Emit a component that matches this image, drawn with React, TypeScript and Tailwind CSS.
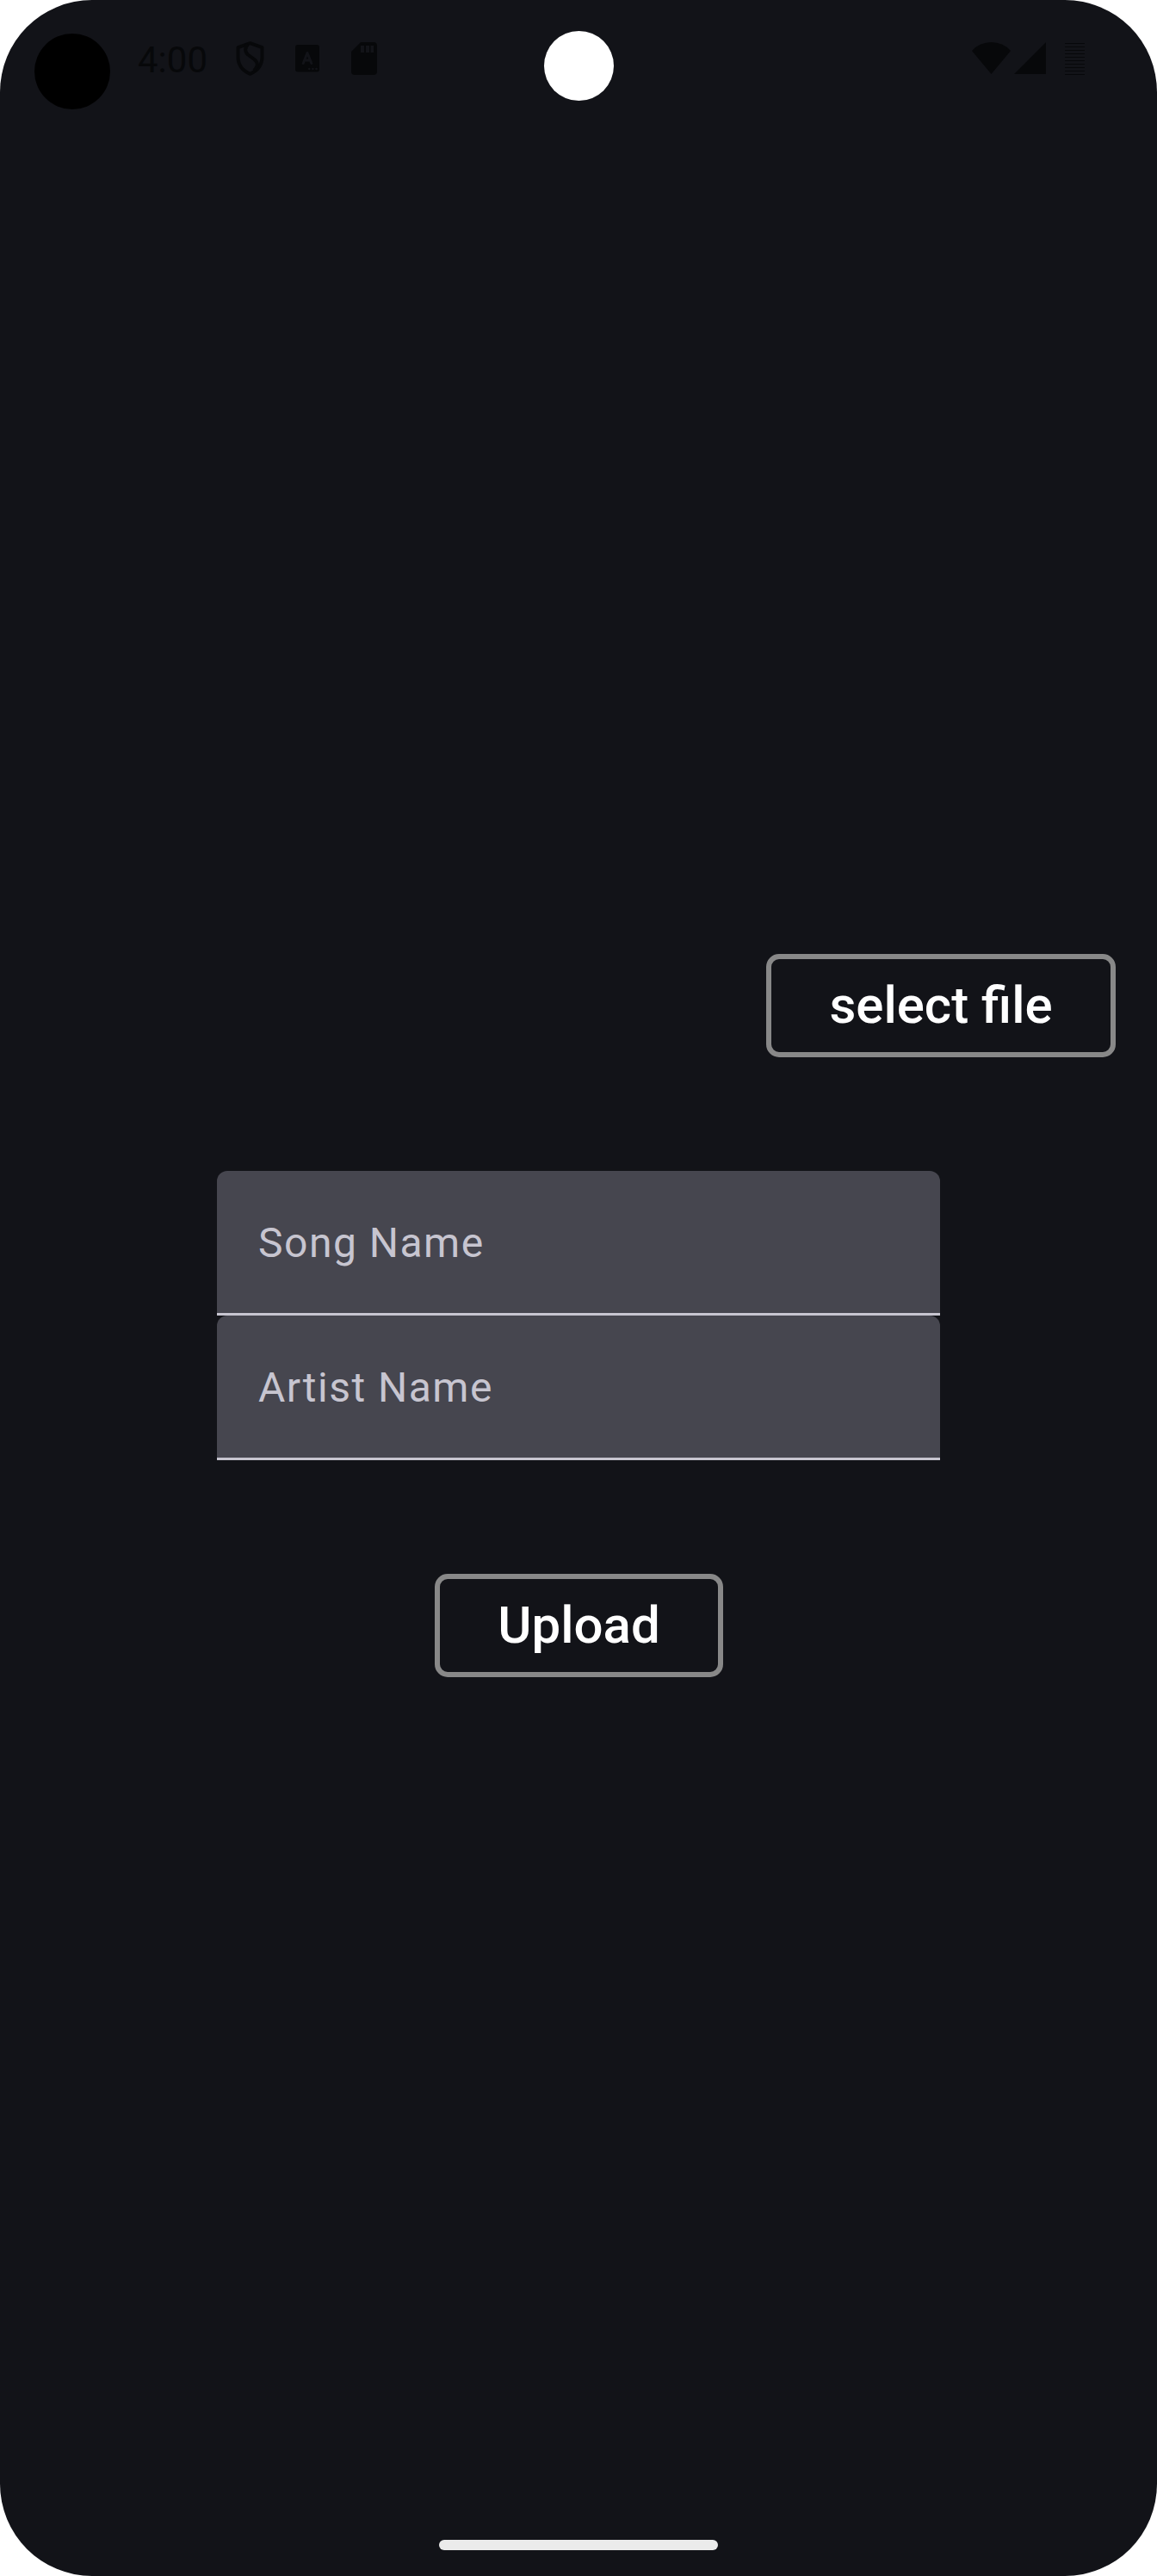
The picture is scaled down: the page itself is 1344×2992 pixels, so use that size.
import React from "react";

const BATTERY_LINES = [50, 54, 58, 62, 66, 70, 74, 78, 82, 86];

function ShieldIcon() {
  return (
    <svg className="ml-[33px] h-10 w-[34px]" viewBox="0 0 34 40" fill="none" stroke="#07080a" strokeWidth="4" strokeLinejoin="round">
      <path d="M16.500 2.200 L30.500 7.200 V18 C30.500 27 25.500 34 16.500 37.800 C7.500 34 2.500 27 2.500 18 V7.200 Z" />
      <path d="M14 3.500 C10 7.500 10.500 12.500 14 15.500 L21.500 21 C26 25 26 28.500 21 34" />
    </svg>
  );
}

function KeyboardIcon() {
  return (
    <svg className="ml-[35px] h-8 w-7" viewBox="0 0 28 32">
      <rect width="28" height="31.500" rx="3" fill="#07080a" />
      <path d="M9.200 21.500 L14 9.500 L18.800 21.500 M10.500 18 H17.200" fill="none" stroke="#121318" strokeWidth="3" strokeLinecap="round" strokeLinejoin="round" />
      <g fill="#121318">
        <circle cx="16.300" cy="28" r="1.300" />
        <circle cx="20.400" cy="28" r="1.300" />
        <circle cx="24.500" cy="28" r="1.300" />
      </g>
    </svg>
  );
}

function SdCardIcon() {
  return (
    <svg className="ml-[37px] h-[38px] w-[30px]" viewBox="0 0 30 38">
      <path d="M11 0 H26 A4 4 0 0 1 30 4 V34 A4 4 0 0 1 26 38 H4 A4 4 0 0 1 0 34 V11 Z" fill="#07080a" />
      <path d="M11 4 H15 V12 H11 Z M17 4 H21 V12 H17 Z M22.500 4 H26 V12 H22.500 Z" fill="#121318" />
    </svg>
  );
}

function SystemIcons() {
  return (
    <svg className="mr-[83px] ml-auto h-10 w-[132px]" viewBox="1129 48 132 40" fill="#07080a">
      <path d="M1129 59 A30.300 30.300 0 0 1 1174 59 L1151.500 86 Z" />
      <path d="M1215 49 V86 H1178 Z" />
      {BATTERY_LINES.map((y) => (
        <rect key={y} x="1237" y={y} width="23" height="1" />
      ))}
    </svg>
  );
}

function OutlineButton({ children, className }: { children: React.ReactNode; className: string }) {
  return (
    <button
      className={`h-[120px] rounded-[15px] border-[6px] border-[#888888] text-center text-[60px] leading-[70px] font-medium whitespace-nowrap text-white ${className}`}
    >
      {children}
    </button>
  );
}

function TextField({ label }: { label: string }) {
  return (
    <label className="flex h-[168px] w-[840px] items-center rounded-t-[12px] bg-[#46464f] px-12 text-[48px] leading-[72px] tracking-[1.5px] text-[#c7c5d0] shadow-[inset_0_-3px_0_#c7c5d0]">
      {label}
    </label>
  );
}

export default function App() {
  return (
    <div className="h-[2992px] w-[1344px] bg-white font-[Roboto,sans-serif]">
      <main className="relative flex h-full flex-col items-center overflow-hidden rounded-[107px] bg-[#121318]">
        <header className="flex h-[136px] w-full items-center pl-10">
          <div className="mt-[30px] h-[88px] w-[88px] rounded-full bg-black" />
          <span className="mt-[3px] ml-8 w-[81px] text-[42px] leading-[50px] whitespace-nowrap text-[#07080a]">4:00</span>
          <ShieldIcon />
          <KeyboardIcon />
          <SdCardIcon />
          <SystemIcons />
        </header>
        <div className="absolute top-[35.5px] left-[631.5px] h-[81px] w-[81px] rounded-full bg-white" />

        <OutlineButton className="mt-[972px] mr-12 w-[406px] self-end">select file</OutlineButton>
        <form className="mt-[132px] flex flex-col">
          <TextField label="Song Name" />
          <TextField label="Artist Name" />
        </form>
        <OutlineButton className="mt-[132px] ml-px w-[335px]">Upload</OutlineButton>

        <div className="mt-auto mb-[30px] h-3 w-[324px] rounded-full bg-[#ebebeb]" />
      </main>
    </div>
  );
}
